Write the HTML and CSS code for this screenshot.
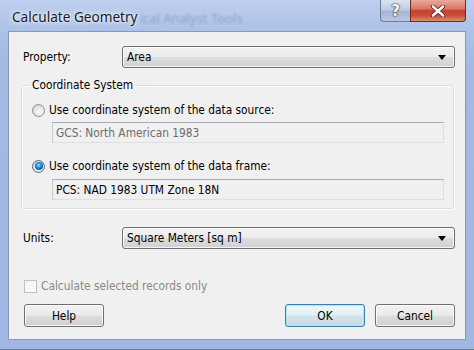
FILE: index.html
```html
<!DOCTYPE html>
<html>
<head>
<meta charset="utf-8">
<link rel="stylesheet" href="styles.css">
</head>
<body>
<div class="window">
  <div class="titlebar">
    <span class="title">Calculate Geometry</span>
    <span class="ghost">ical Analyst Tools</span>
    <div class="caption-buttons">
      <div class="cap-btn help-cap"><span>?</span></div>
      <div class="cap-btn close-cap">
        <svg width="18" height="12" viewBox="0 0 18 12"><path d="M4 1.5 L14 10.5 M14 1.5 L4 10.5" stroke="#5a1a12" stroke-width="4.2" stroke-linecap="round"/><path d="M4 1.5 L14 10.5 M14 1.5 L4 10.5" stroke="#ffffff" stroke-width="2.6" stroke-linecap="round"/></svg>
      </div>
    </div>
  </div>
  <div class="client">
    <div class="row">
      <span class="label">Property:</span>
      <div class="combo"><span>Area</span><i class="arrow"></i></div>
    </div>
    <fieldset class="group">
      <legend>Coordinate System</legend>
      <div class="option"><span class="radio"></span><span>Use coordinate system of the data source:</span></div>
      <div class="textbox disabled">GCS: North American 1983</div>
      <div class="option second"><span class="radio checked"></span><span>Use coordinate system of the data frame:</span></div>
      <div class="textbox tb2">PCS: NAD 1983 UTM Zone 18N</div>
    </fieldset>
    <div class="row units">
      <span class="label">Units:</span>
      <div class="combo"><span>Square Meters [sq m]</span><i class="arrow"></i></div>
    </div>
    <div class="check-row"><span class="checkbox"></span><span>Calculate selected records only</span></div>
    <div class="buttons">
      <div class="btn">Help</div>
      <div class="btn-group">
        <div class="btn default">OK</div>
        <div class="btn">Cancel</div>
      </div>
    </div>
  </div>
</div>
</body>
</html>
```

FILE: styles.css
```css
html, body {
  margin: 0;
  padding: 0;
}
body {
  width: 474px;
  height: 350px;
  overflow: hidden;
  background: #a6bce3;
}
.window {
  width: 474px;
  height: 350px;
  box-sizing: border-box;
  background: linear-gradient(to bottom, #bfcfee 0px, #aec3e9 28px, #a3bae3 60px, #9fb7e2 100%);
  border-bottom: 1px solid #6d7fa3;
  display: flex;
  flex-direction: column;
}
.titlebar {
  height: 32px;
  display: flex;
  align-items: center;
  padding-left: 12px;
  position: relative;
  font-family: "Noto Sans", "Open Sans", sans-serif;
}
.title {
  font-size: 13.6px;
  color: #1b1b1b;
  text-shadow: 0 0 6px rgba(255,255,255,0.9), 0 0 3px rgba(255,255,255,0.9);
  position: relative;
  z-index: 1;
  margin-top: 2px;
}
.ghost {
  font-size: 13px;
  color: rgba(70, 90, 140, 0.34);
  filter: blur(1.1px);
  margin-left: 2px;
  margin-top: 4px;
}
.caption-buttons {
  position: absolute;
  top: 0;
  left: 380px;
  display: flex;
}
.cap-btn {
  height: 22px;
  box-sizing: border-box;
  border: 1px solid #6e7c99;
  border-top: none;
  display: flex;
  align-items: center;
  justify-content: center;
}
.help-cap {
  width: 30px;
  border-radius: 0 0 0 4px;
  border-right: none;
  background: linear-gradient(to bottom, #dbe3f1 0%, #c1cde3 45%, #a7b6d2 55%, #b9c7df 100%);
}
.help-cap span {
  font-family: "DejaVu Sans", sans-serif;
  font-weight: bold;
  font-size: 15px;
  color: #f4f6fa;
  text-shadow: 0 0 1px #3a4458, 0 0 1px #3a4458, 0 0 2px #3a4458;
}
.close-cap {
  width: 56px;
  border-radius: 0 0 4px 0;
  border-color: #6c2a22;
  background: linear-gradient(to bottom, #e9a99c 0%, #dc7a68 40%, #c6402c 52%, #c9503c 75%, #e08d6e 100%);
}
.close-cap svg { display: block; }

.client {
  margin: 0 8px 9px 8px;
  flex: 1;
  box-sizing: border-box;
  background: #f0f0f0;
  border: 1px solid #8799bb;
  padding: 14px 10px 12px 14px;
  display: flex;
  flex-direction: column;
  font-family: "DejaVu Sans Condensed", "DejaVu Sans", sans-serif;
  font-size: 11.8px;
  color: #000;
}
.row {
  display: flex;
  align-items: center;
}
.label {
  width: 99px;
}
.combo {
  flex: 1;
  height: 22px;
  box-sizing: border-box;
  border: 1px solid #707070;
  border-radius: 3px;
  background: linear-gradient(to bottom, #f3f3f3 0%, #ebebeb 48%, #dddddd 52%, #d0d0d0 100%);
  box-shadow: inset 0 0 0 1px rgba(255,255,255,0.75);
  display: flex;
  align-items: center;
  padding: 0 8px 0 4px;
}
.combo span { flex: 1; }
.arrow {
  width: 0;
  height: 0;
  border-left: 4px solid transparent;
  border-right: 4px solid transparent;
  border-top: 5px solid #000;
}
.group {
  margin: 10px 1px 0 -2px;
  padding: 11px 9px 8px 8px;
  border: 1px solid #d5dfe5;
  border-radius: 3px;
  box-shadow: inset 1px 1px 0 #ffffff, 1px 1px 0 #ffffff;
  min-width: 0;
}
.group legend {
  padding: 0 2px;
  line-height: 14px;
}
.option {
  display: flex;
  align-items: center;
  height: 14px;
  margin-left: 2px;
}
.option.second {
  margin-top: 16px;
}
.radio {
  width: 13px;
  height: 13px;
  box-sizing: border-box;
  border-radius: 50%;
  border: 1px solid #8f8f8f;
  background: radial-gradient(circle at 60% 65%, #fbfbfb 0%, #e8e8e8 45%, #c9c9c9 100%);
  margin-right: 4px;
  display: flex;
  align-items: center;
  justify-content: center;
}
.radio.checked {
  border-color: #4d6f93;
}
.radio.checked::after {
  content: "";
  width: 8px;
  height: 8px;
  border-radius: 50%;
  background: radial-gradient(circle at 45% 40%, #a6e6ff 0%, #2a94d6 35%, #0d4f8e 75%, #0a3260 100%);
}
.textbox {
  margin: 5px 0 0 22px;
  height: 21px;
  box-sizing: border-box;
  border: 1px solid #dcdfe4;
  border-top-color: #a9abb1;
  border-left-color: #c9cbd0;
  display: flex;
  align-items: center;
  padding-left: 3px;
  background: #f0f0f0;
}
.textbox.disabled { color: #6d6d6d; }
.textbox.tb2 { margin-top: 6px; }
.units { margin-top: 18px; }
.check-row {
  display: flex;
  align-items: center;
  margin-top: 30px;
  margin-left: 1px;
  height: 14px;
  color: #8a8a8a;
}
.checkbox {
  width: 13px;
  height: 13px;
  box-sizing: border-box;
  border: 1px solid #c0c0c0;
  background: linear-gradient(135deg, #f2f2f2, #fcfcfc);
  margin-right: 4px;
}
.buttons {
  margin-top: 11px;
  display: flex;
  justify-content: space-between;
  margin-left: 1px;
}
.btn-group {
  display: flex;
  gap: 10px;
}
.btn {
  width: 80px;
  height: 23px;
  box-sizing: border-box;
  border: 1px solid #707070;
  border-radius: 3px;
  background: linear-gradient(to bottom, #f2f2f2 0%, #ebebeb 48%, #dddddd 52%, #cfcfcf 100%);
  box-shadow: inset 0 0 0 1px rgba(255,255,255,0.8);
  display: flex;
  align-items: center;
  justify-content: center;
}
.btn.default {
  border-color: #3c7fb1;
  box-shadow: inset 0 0 0 1px #a9e4f7;
  background: linear-gradient(to bottom, #eef6fa 0%, #e3eef5 48%, #d3e4ef 52%, #c7dbe8 100%);
}
```
